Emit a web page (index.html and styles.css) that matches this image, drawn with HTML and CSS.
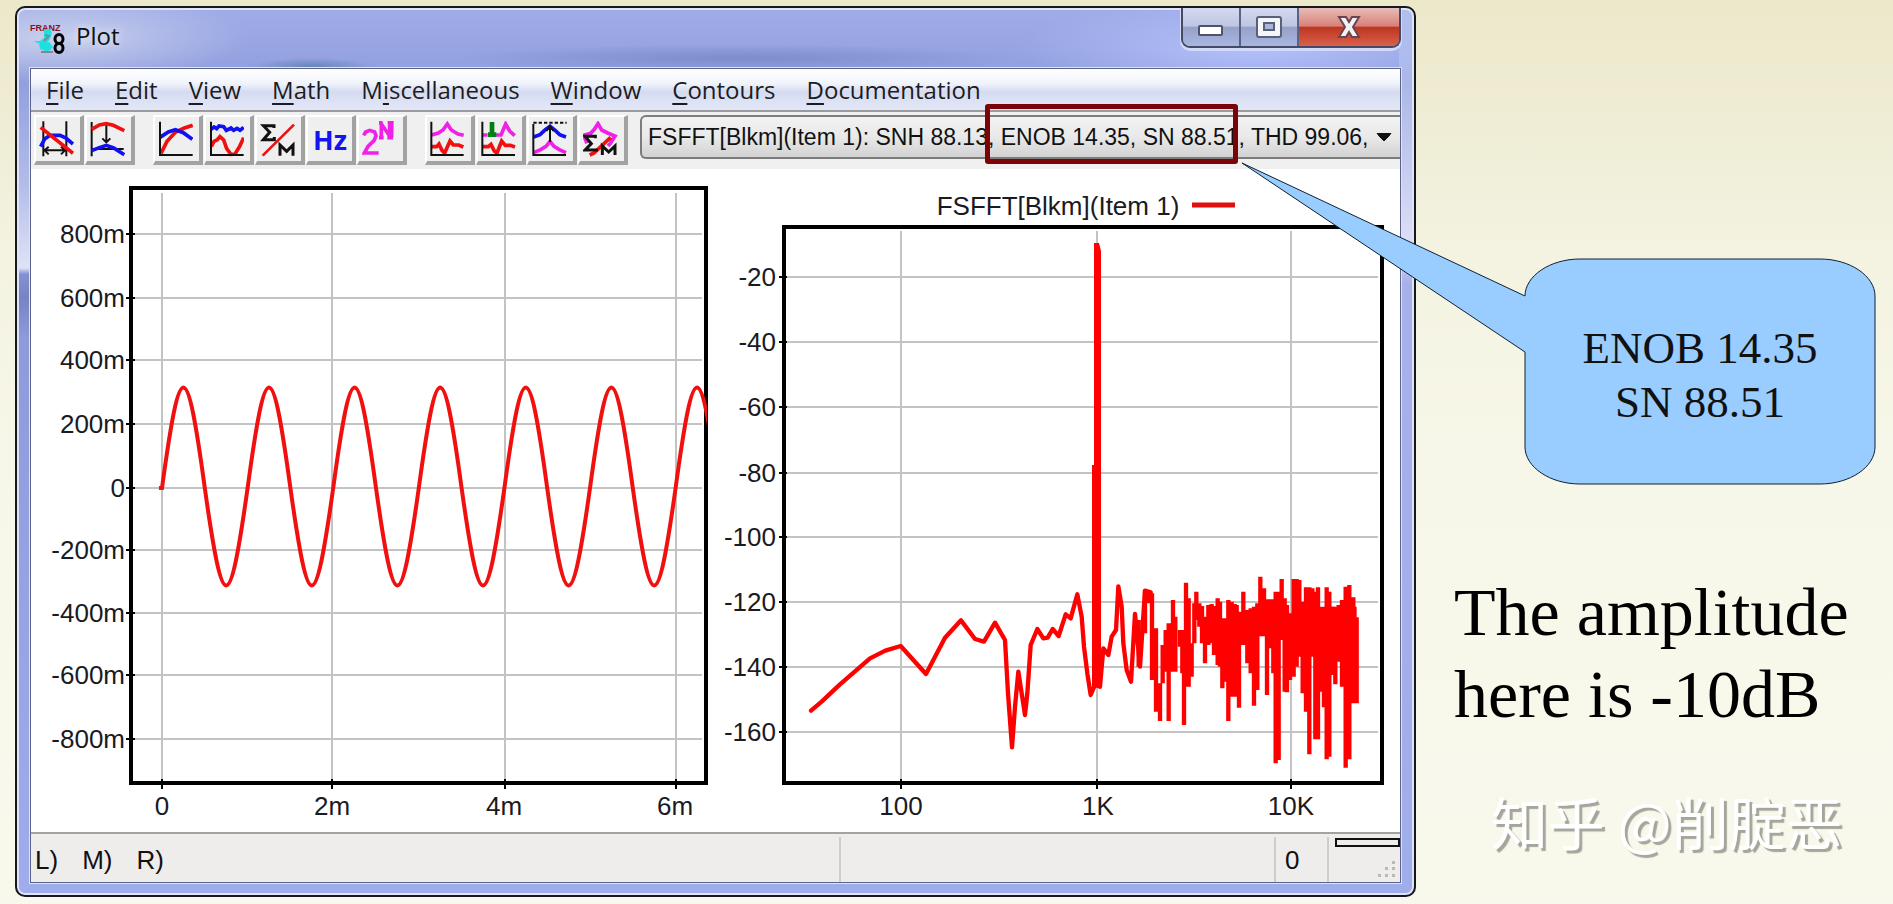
FILE: index.html
```html
<!DOCTYPE html>
<html lang="en">
<head>
<meta charset="utf-8">
<title>Plot</title>
<link rel="stylesheet" href="styles.css">
</head>
<body>
<main class="slide">
  <section class="window" aria-label="Plot window">
    <header class="titlebar">
      <svg class="app-icon" viewBox="0 0 35 34" width="35" height="34" aria-hidden="true">
        <text x="0" y="10" class="app-icon-text" fill="#8b1020">FRANZ</text>
        <path d="M14 8h6l2 4-2 6-5 6-8-2-3-2 6 0 4-3z" fill="#20dfe0"/>
        <path d="M9 23l10-2 4 5-5 5-8-3z" fill="#20dfe0"/>
        <path d="M15 14l4 1-5 5M11 31h12" stroke="#808a90" stroke-width="2" fill="none"/>
        <ellipse cx="29" cy="18" rx="4" ry="4.5" fill="none" stroke="#000" stroke-width="3"/>
        <ellipse cx="29" cy="27" rx="4" ry="4.5" fill="none" stroke="#000" stroke-width="3"/>
      </svg>
      <h1 class="title">Plot</h1>
      <div class="window-buttons">
        <button class="wb" aria-label="Minimize"><svg width="26" height="24" viewBox="0 0 26 24"><rect x="1" y="11" width="23" height="9" rx="1" fill="#fff" stroke="#4d5368" stroke-width="2"/></svg></button>
        <button class="wb" aria-label="Maximize"><svg width="26" height="24" viewBox="0 0 26 24"><rect x="1" y="2" width="24" height="20" rx="2" fill="#f4f5fa" stroke="#5a6078" stroke-width="2"/><rect x="8" y="8" width="10" height="7" fill="#aab4dc" stroke="#5a6078" stroke-width="2"/></svg></button>
        <button class="wb wb-close" aria-label="Close"><svg width="26" height="24" viewBox="0 0 26 24"><path d="M3 2h7l3 5 3-5h7l-6 10 6 10h-7l-3-5-3 5H3l6-10z" fill="#f2f2f4" stroke="#6a4550" stroke-width="2"/></svg></button>
      </div>
    </header>

    <div class="client">
      <nav class="menubar">
        <a href="#"><u>F</u>ile</a>
        <a href="#"><u>E</u>dit</a>
        <a href="#"><u>V</u>iew</a>
        <a href="#"><u>M</u>ath</a>
        <a href="#">M<u>i</u>scellaneous</a>
        <a href="#"><u>W</u>indow</a>
        <a href="#"><u>C</u>ontours</a>
        <a href="#"><u>D</u>ocumentation</a>
      </nav>

      <div class="toolbar">
        <div class="tools">
          <button class="tool" aria-label="Fit width"><svg viewBox="63 49 105 108"><path class="k" d="M76 50V155M145 50V155M80 137H141M92 126L80 137L92 149M129 126L141 137L129 149"/><path class="b" d="M68 126L80 103L96 92H126L144 100L165 118"/><path class="r" d="M68 68L165 146"/></svg></button>
          <button class="tool" aria-label="Fit height"><svg viewBox="217 49 105 108"><path class="k" d="M222 52V155M222 133H318M266 60V112M254 101L266 113L278 101"/><path class="r" d="M222 74L245 61L265 57L287 62L320 78"/><path class="b" d="M222 138L245 129L266 122L288 130L320 150"/></svg></button>
        </div>
        <div class="tools">
          <button class="tool" aria-label="Line plot"><svg viewBox="421 49 105 108"><path class="r" d="M430 146L448 110L474 82L500 70L525 62"/><path class="b" d="M427 98L452 82L473 75L497 84L524 104"/><path class="k" d="M427 51V151H525"/></svg></button>
          <button class="tool" aria-label="Wave plot"><svg viewBox="574 49 105 108"><path class="b" d="M580 74L589 67L597 72L604 64L618 66L626 77L640 70L648 77L658 71L667 77L678 68"/><path class="r" d="M581 125L589 110L598 106L607 96L618 106L627 132L640 149L652 148L666 125L678 99"/><path class="k" d="M580 51V151H678"/></svg></button>
          <button class="tool" aria-label="Sum over M"><svg viewBox="730 49 105 108"><path class="r thin" d="M738 153L832 60"/><path class="k bold" d="M772 70V63H740L759 83L740 105H773V97M790 153V121L810 140L829 121V153"/></svg></button>
          <button class="tool tool-hz">Hz</button>
          <button class="tool" aria-label="2 to the N"><svg viewBox="81 49 105 108"><path class="m" d="M86 92L92 82L104 77L119 82L123 94L117 108L99 125L88 145H131"/><path class="m" d="M139 54V98M164 54V98M139 58L164 94M132 54H143M158 54H176M132 99H146M157 99H174M170 54V98"/></svg></button>
        </div>
        <div class="tools">
          <button class="tool" aria-label="Peak and noise"><svg viewBox="282 49 105 108"><path class="m" d="M287 91L307 85L321 76L334 58L346 76L366 88L383 92"/><path class="r" d="M287 126H302L309 118L318 137L326 145L342 109L352 121H368L382 127"/><path class="k" d="M286 51V151H383"/></svg></button>
          <button class="tool" aria-label="Marker"><svg viewBox="434 49 105 108"><path class="m" d="M439 91H454M479 91H494L508 58L520 79L535 93"/><path class="g" d="M467 52V91M455 90H480"/><path class="r" d="M440 126H456L464 119L474 139L482 145L496 109L507 122H522L536 127"/><path class="k" d="M438 51V151H536"/></svg></button>
          <button class="tool" aria-label="Peak distance"><svg viewBox="588 49 105 108"><path class="k" stroke-dasharray="10 6" d="M592 54H692"/><path class="b" d="M593 97L612 90L628 75L642 65L656 76L671 90L690 97"/><path class="m" d="M593 144L614 135L630 125L642 110L654 125L670 135L690 144"/><path class="k" d="M592 58V151H690M642 60V112M631 79L642 65L653 79"/></svg></button>
          <button class="tool" aria-label="Spectrum sum"><svg viewBox="745 49 105 108"><path class="m" d="M746 92L768 86L779 74L790 57L801 76L819 85L841 94L827 116L820 124M748 94L757 116"/><path class="r" d="M765 151L778 145L828 98"/><path class="k bold" d="M782 101V95H751L770 117L751 136H790M803 151V124L822 142L841 124V151"/></svg></button>
        </div>
        <div class="combo">
          <select class="combo-select" aria-label="Trace">
            <option>FSFFT[Blkm](Item 1): SNH 88.13, ENOB 14.35, SN 88.51, THD 99.06,</option>
          </select>
          <span class="highlight"></span>
        </div>
      </div>

      <div class="plots">
        <svg class="plot" viewBox="31 169 684 663" role="img" aria-label="Waveform">
          <defs><clipPath id="wave"><path d="M131 188H707V782H131z"/></clipPath></defs>
          <path class="grid" d="M162 193V781M332 193V781M505 193V781M676 193V781M131 234H702M131 298H702M131 360H702M131 424H702M131 488H702M131 550H702M131 613H702M131 675H702M131 739H702"/>
          <rect class="frame" x="131" y="188" width="575" height="595"/>
          <path class="tick" d="M126 234H135M126 298H135M126 360H135M126 424H135M126 488H135M126 550H135M126 613H135M126 675H135M126 739H135M162 779V789M332 779V789M505 779V789M676 779V789"/>
          <path class="trace" clip-path="url(#wave)" d="M159 488h3c18.2-134 24.6-134 42.8 0c18.2 130 24.6 130 42.8 0c18.2-134 24.6-134 42.8 0c18.2 130 24.6 130 42.8 0c18.2-134 24.6-134 42.8 0c18.2 130 24.6 130 42.8 0c18.2-134 24.6-134 42.8 0c18.2 130 24.6 130 42.8 0c18.2-134 24.6-134 42.8 0c18.2 130 24.6 130 42.8 0c18.2-134 24.6-134 42.8 0c18.2 130 24.6 130 42.8 0c18.2-134 24.6-134 42.8 0"/>
          <g class="label" text-anchor="end">
            <text x="125" y="243">800m</text><text x="125" y="307">600m</text><text x="125" y="369">400m</text><text x="125" y="433">200m</text><text x="125" y="497">0</text><text x="125" y="559">-200m</text><text x="125" y="622">-400m</text><text x="125" y="684">-600m</text><text x="125" y="748">-800m</text>
          </g>
          <g class="label" text-anchor="middle">
            <text x="162" y="815">0</text><text x="332" y="815">2m</text><text x="504" y="815">4m</text><text x="675" y="815">6m</text>
          </g>
        </svg>
        <svg class="plot" viewBox="715 169 685 663" role="img" aria-label="Spectrum">
          <path class="grid" d="M901 231V781M1097 231V781M1291 231V781M784 277H1378M784 342H1378M784 407H1378M784 473H1378M784 537H1378M784 602H1378M784 667H1378M784 732H1378"/>
          <rect class="frame" x="784" y="227" width="598" height="556"/>
          <path class="tick" d="M779 277H787M779 342H787M779 407H787M779 473H787M779 537H787M779 602H787M779 667H787M779 732H787M901 779V789M1097 779V789M1291 779V789"/>
          <path d="M1192 205H1235" stroke="#e01010" stroke-width="5"/>
          <path d="M1094 243h5l2 8V687h-9V465h2z" fill="#f00"/>
          <g transform="translate(1080 540) scale(.33333)" fill="none" stroke="#f00" stroke-width="13" stroke-linejoin="round">
            <path stroke-linecap="round" d="M-807 512L-775 485L-720 433L-630 355L-584 332L-538 318L-462 402L-405 293L-357 241L-315 297L-288 305L-255 248L-225 300L-216 460L-204 622L-195 500L-185 395L-165 525L-158 460L-148 315L-128 267L-110 295L-97 293L-82 267L-64 288L-43 223L-28 235L-8 163L5 230L12 320L22 400L32 465L45 435L60 440L70 325L85 345L95 290L108 270L115 139L125 200L130 310L140 390L153 425L165 222L180 380L195 152L212 157"/>
            <path d="M176 240V380M195 150V280M205 150V190M216 160V420M228 265V515M240 430V543M248 315V430M257 270V395M266 250V543M279 180V395M286 230V395M300 270V320M307 270V400M312 270V555M318 128V440M326 175V440M335 310V410M343 190V310M349 155V240M358 190V260M366 198V310M375 230V370M385 195V315M395 192V310M402 198V345M413 175V375M420 185V380M427 245V445M434 255V425M445 180V543M455 185V470M464 192V470M470 195V380M477 215V503M490 155V315M502 210V370M512 205V400M522 200V497M532 190V450M541 110V280M552 145V240M561 178V465M570 178V325M580 178V400M587 155V670M596 155V660M605 117V300M614 175V455M621 195V457M630 220V420M641 117V410M650 117V380M658 120V330M668 185V460M678 142V515M688 142V643M697 145V330M706 155V598M714 142V598M724 210V455M732 210V502M740 142V658M748 155V650M757 200V405M766 210V433M776 195V365M786 180V440M797 140V683M808 135V658M820 172V490M830 232V490"/>
            <path d="M370 262H830" stroke-width="54"/>
            <path d="M640 275H830" stroke-width="150"/>
          </g>
          <g class="label" text-anchor="end">
            <text x="776" y="286">-20</text><text x="776" y="351">-40</text><text x="776" y="416">-60</text><text x="776" y="482">-80</text><text x="776" y="546">-100</text><text x="776" y="611">-120</text><text x="776" y="676">-140</text><text x="776" y="741">-160</text>
          </g>
          <g class="label" text-anchor="middle">
            <text x="901" y="815">100</text><text x="1098" y="815">1K</text><text x="1291" y="815">10K</text><text x="1058" y="215">FSFFT[Blkm](Item 1)</text>
          </g>
        </svg>
      </div>

      <footer class="statusbar">
        <div class="status-keys"><span>L)</span><span>M)</span><span>R)</span></div>
        <div class="status-cell"></div>
        <div class="status-cell status-count">0</div>
        <div class="status-cell status-end">
          <span class="meter"></span>
          <svg class="grip" width="18" height="18" viewBox="0 0 18 18" fill="#bbb8b8"><path d="M14 1h3v3h-3zM7 7h3v3H7zM14 7h3v3h-3zM0 14h3v3H0zM7 14h3v3H7zM14 14h3v3h-3z"/></svg>
        </div>
      </footer>
    </div>
  </section>

  <aside class="notes">
    <div class="callout">
      <svg class="callout-shape" width="636" height="324" viewBox="1241 162 636 324" aria-hidden="true">
        <path d="M1242 163L1525 296C1525 276 1550 259 1580 259H1820C1850 259 1875 276 1875 296V447C1875 467 1850 484 1820 484H1580C1550 484 1525 467 1525 447V352Z" fill="#99ccff" stroke="#102030"/>
      </svg>
      <p class="callout-text">ENOB 14.35<br>SN 88.51</p>
    </div>
    <p class="remark">The amplitude here is -10dB</p>
    <p class="watermark" lang="zh-CN">知乎 @削腚恶</p>
  </aside>
</main>
</body>
</html>
```
FILE: styles.css
```css
* { box-sizing: border-box; }

body {
  margin: 0;
  min-height: 100vh;
  font-family: "Liberation Sans", Arial, sans-serif;
  color: #111;
  background: linear-gradient(#ece8ca 0, #efedd5 14%, #f4f3e1 28%, #f7f7e9 50%, #f8f8ec 100%);
}

h1, p { margin: 0; font-weight: normal; }

.slide {
  display: grid;
  grid-template-columns: minmax(0, 1401fr) minmax(0, 477fr);
  align-items: start;
  padding: 6px 0 6px 15px;
}

.window {
  border: 2px solid #17171f;
  border-radius: 10px;
  padding: 0 13px 12px 13px;
  box-shadow: inset 0 0 0 2px #dfe4f6;
  background:
    radial-gradient(ellipse 190px 46px at 40px 30px, #c9d0ec, #c9d0ec00),
    radial-gradient(ellipse 60px 8px at 295px 58px, #6787bc, #6787bc00),
    radial-gradient(ellipse 280px 14px at 720px 50px, #7f8ccb, #7f8ccb00),
    radial-gradient(ellipse 240px 50px at 1240px 40px, #b3c0fa, #b3c0fa00),
    linear-gradient(#b3bfea 0, #a9b6e6 70px, #dfe0f8 240px, #a8b0ea 275px, #a0adec 100%) right / 15px 100% no-repeat,
    linear-gradient(#a0ade8 0, #909ede 70px, #b4beea 180px, #dfe3f6 260px, #8392d2 266px, #7683c4 290px, #8d9bdc 330px, #a0adec 100%);
}

.titlebar {
  display: flex;
  align-items: flex-start;
  height: 60px;
}
.app-icon { margin: 13px 11px 0 0; }
.app-icon-text { font: bold 9px "Liberation Sans", Arial, sans-serif; }
.title {
  font: 24px/32px "Open Sans", sans-serif;
  margin-top: 12px;
  text-shadow: 0 0 10px #fff;
}

.window-buttons {
  display: flex;
  margin-left: auto;
  height: 40px;
  border: 2px solid #454b66;
  border-top: 0;
  border-radius: 0 0 9px 9px;
  overflow: hidden;
  box-shadow: 0 2px 0 1px #d3daf7;
}
.wb {
  width: 58px;
  padding: 0;
  border: 0;
  border-right: 2px solid #5b6286;
  display: grid;
  place-items: center;
  background: linear-gradient(#d4daee 0, #bcc5e2 48%, #96a1c8 50%, #a9b6e2 100%);
}
.wb-close {
  width: 100px;
  border-right: 0;
  background: linear-gradient(#e8bcb8 0, #d88078 48%, #bc3620 50%, #d8604c 100%);
}

.client {
  border: 1px solid #5b6488;
  box-shadow: 0 0 0 1px #dde2f6;
  background: #fff;
}

.menubar {
  display: flex;
  gap: 31px;
  height: 41px;
  padding: 0 15px;
  font: 24px/42px "Open Sans", sans-serif;
  background: linear-gradient(#fff 0, #f0f4fb 35%, #d6dcf0 55%, #e2e7f8 100%);
}
.menubar a { color: #1c1c24; text-decoration: none; }
.menubar u { text-decoration-thickness: 2px; text-underline-offset: 4px; }

.toolbar {
  display: flex;
  align-items: flex-start;
  height: 59px;
  padding: 3px 0 0 3px;
  border-top: 2px solid #9b9b9f;
  background: #f0f0f0;
}
.tools { display: flex; gap: 1px; margin-right: 18px; }
.tools:nth-of-type(3) { margin-right: 12px; }
.tool {
  width: 50px;
  height: 50px;
  padding: 0 3px 0 0;
  display: grid;
  place-items: center;
  border: solid;
  border-width: 2px 4px 4px 2px;
  border-color: #fff #a2a2a2 #a2a2a2 #fff;
  background: #efefef;
}
.tool svg { width: 35px; height: 36px; }
.tool path { fill: none; stroke-width: 11; }
.tool .k { stroke: #111; stroke-width: 6; }
.tool .bold { stroke-width: 9; }
.tool .r { stroke: #f01010; }
.tool .thin { stroke-width: 8; }
.tool .b { stroke: #1010f0; }
.tool .m { stroke: #f020e8; }
.tool .g { stroke: #008010; stroke-width: 14; }
.tool-hz { font: bold 27px "Noto Sans", sans-serif; color: #1414f0; padding: 0; }

.combo { position: relative; flex: 1; min-width: 0; }
.combo-select {
  appearance: none;
  width: 100%;
  height: 44px;
  padding: 0 0 0 6px;
  font: 23px "Liberation Sans", Arial, sans-serif;
  color: #111;
  border: 2px solid #7c7c7c;
  border-right: 0;
  border-radius: 6px 0 0 6px;
  background:
    linear-gradient(to top right, #0000 50%, #111 52%) right 16px center / 8px 9px no-repeat,
    linear-gradient(to top left, #0000 50%, #111 52%) right 8px center / 8px 9px no-repeat,
    linear-gradient(#f2f2f2, #e9e9e9 50%, #d2d2d2);
}
.highlight {
  position: absolute;
  left: 345px;
  top: -11px;
  width: 253px;
  height: 60px;
  border: 5px solid #7c0208;
  border-radius: 3px;
  pointer-events: none;
}

.plots { display: grid; grid-template-columns: 684fr 685fr; }
.plot { display: block; width: 100%; height: auto; }
.grid { stroke: #c3c3c3; stroke-width: 2; fill: none; }
.frame { stroke: #000; stroke-width: 4; fill: none; }
.tick { stroke: #000; stroke-width: 2; fill: none; }
.trace { stroke: #f01010; stroke-width: 4; fill: none; }
.label { font: 26px "Liberation Sans", Arial, sans-serif; fill: #1a1a22; }

.statusbar {
  display: flex;
  height: 50px;
  padding-top: 3px;
  font-size: 26px;
  line-height: 46px;
  border-top: 2px solid #a3a3a3;
  background: #efecec;
}
.status-keys { display: flex; gap: 24px; flex: 808 1 0; padding-left: 4px; }
.status-cell { flex: 435 1 0; border-left: 2px solid #cfcccc; }
.status-count { flex: 0 0 53px; padding-left: 9px; }
.status-end {
  flex: 0 0 73px;
  display: flex;
  flex-direction: column;
  align-items: flex-end;
  justify-content: space-between;
  padding: 1px 0 4px;
}
.meter { width: 65px; height: 9px; border: 2px solid #111; }
.grip { margin-right: 4px; }

.notes { position: relative; padding: 253px 18px 0 0; }
.callout {
  position: relative;
  display: grid;
  place-items: center;
  width: 350px;
  height: 226px;
  margin-left: auto;
}
.callout-shape { position: absolute; right: -2px; bottom: -1px; }
.callout-text {
  position: relative;
  font: 45px/54px "Liberation Serif", "Times New Roman", serif;
  text-align: center;
  padding-top: 6px;
}
.remark {
  margin: 86px 0 0 38px;
  font: 68px/82px "Liberation Serif", "Times New Roman", serif;
  color: #000;
}
.watermark {
  margin: 44px 0 0 75px;
  font: 57px/82px "Noto Sans CJK SC", sans-serif;
  white-space: nowrap;
  color: #fff;
  text-shadow: 3px 3px 1px #a5a59c;
}
```
